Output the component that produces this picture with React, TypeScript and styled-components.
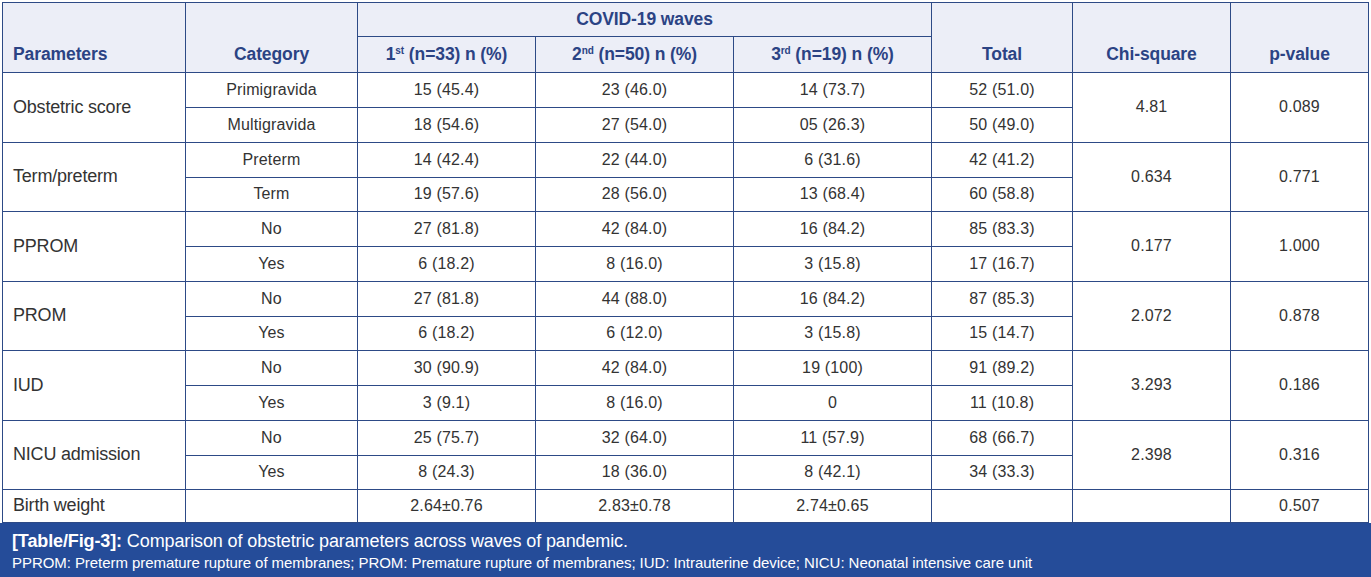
import React from "react";
import styled, { createGlobalStyle } from "styled-components";

const Global = createGlobalStyle`
  html, body { margin: 0; padding: 0; background: #ffffff; }
  body { font-family: "Liberation Sans", Arial, sans-serif; }
`;

const Page = styled.div`
  width: 1371px;
  height: 577px;
  display: flex;
  flex-direction: column;
  background: #ffffff;
  overflow: hidden;
`;

const TableWrap = styled.div`
  padding: 2px 3px 0 2px;
`;

const Table = styled.table`
  border-collapse: collapse;
  table-layout: fixed;
  width: 1366px;
  font-family: "Liberation Sans", Arial, sans-serif;
  font-size: 16px;
  color: #333333;
`;

const border = "1px solid #2d4a86";

const Th = styled.th<{ $align?: string; $valign?: string }>`
  background: #eceef7;
  color: #2b4384;
  font-weight: bold;
  font-size: 17.5px;
  letter-spacing: -0.1px;
  border: ${border};
  text-align: ${(p) => p.$align || "center"};
  vertical-align: ${(p) => p.$valign || "middle"};
  padding: ${(p) => (p.$align === "left" ? "0 0 7px 10px" : p.$valign === "bottom" ? "0 0 7px 0" : "0")};
  white-space: nowrap;
`;

const HeadRow = styled.tr<{ $h: number }>`
  height: ${(p) => p.$h}px;
`;

const Row = styled.tr<{ $h: number }>`
  height: ${(p) => p.$h}px;
`;

const Td = styled.td<{ $left?: boolean }>`
  border: ${border};
  text-align: ${(p) => (p.$left ? "left" : "center")};
  padding: ${(p) => (p.$left ? "0 0 0 10px" : "0")};
  font-size: ${(p) => (p.$left ? "18px" : "16px")};
  letter-spacing: ${(p) => (p.$left ? "-0.2px" : "0.15px")};
  vertical-align: middle;
  white-space: nowrap;
`;

const Sup = styled.sup`
  font-size: 10px;
  vertical-align: 6px;
  line-height: 0;
`;

const Caption = styled.div`
  flex: 1;
  background: #254c99;
  color: #ffffff;
  padding: 8px 0 0 12px;
  display: flex;
  flex-direction: column;
  gap: 2px;
`;

const CaptionTitle = styled.div`
  font-size: 18px;
  line-height: 21px;
  font-family: "Liberation Sans", Arial, sans-serif;
  letter-spacing: -0.12px;
`;

const CaptionNote = styled.div`
  font-size: 15px;
  line-height: 18px;
  font-family: "Liberation Sans", Arial, sans-serif;
  letter-spacing: -0.06px;
`;

type Group = {
  name: string;
  chi: string;
  p: string;
  rows: [string, string, string, string, string][];
};

const groups: Group[] = [
  {
    name: "Obstetric score",
    chi: "4.81",
    p: "0.089",
    rows: [
      ["Primigravida", "15 (45.4)", "23 (46.0)", "14 (73.7)", "52 (51.0)"],
      ["Multigravida", "18 (54.6)", "27 (54.0)", "05 (26.3)", "50 (49.0)"],
    ],
  },
  {
    name: "Term/preterm",
    chi: "0.634",
    p: "0.771",
    rows: [
      ["Preterm", "14 (42.4)", "22 (44.0)", "6 (31.6)", "42 (41.2)"],
      ["Term", "19 (57.6)", "28 (56.0)", "13 (68.4)", "60 (58.8)"],
    ],
  },
  {
    name: "PPROM",
    chi: "0.177",
    p: "1.000",
    rows: [
      ["No", "27 (81.8)", "42 (84.0)", "16 (84.2)", "85 (83.3)"],
      ["Yes", "6 (18.2)", "8 (16.0)", "3 (15.8)", "17 (16.7)"],
    ],
  },
  {
    name: "PROM",
    chi: "2.072",
    p: "0.878",
    rows: [
      ["No", "27 (81.8)", "44 (88.0)", "16 (84.2)", "87 (85.3)"],
      ["Yes", "6 (18.2)", "6 (12.0)", "3 (15.8)", "15 (14.7)"],
    ],
  },
  {
    name: "IUD",
    chi: "3.293",
    p: "0.186",
    rows: [
      ["No", "30 (90.9)", "42 (84.0)", "19 (100)", "91 (89.2)"],
      ["Yes", "3 (9.1)", "8 (16.0)", "0", "11 (10.8)"],
    ],
  },
  {
    name: "NICU admission",
    chi: "2.398",
    p: "0.316",
    rows: [
      ["No", "25 (75.7)", "32 (64.0)", "11 (57.9)", "68 (66.7)"],
      ["Yes", "8 (24.3)", "18 (36.0)", "8 (42.1)", "34 (33.3)"],
    ],
  },
];

const widths = [183, 172, 178, 198, 198, 141, 158, 138];

export default function App() {
  return (
    <Page>
      <Global />
      <TableWrap>
        <Table>
          <colgroup>
            {widths.map((w, i) => (
              <col key={i} style={{ width: w }} />
            ))}
          </colgroup>
          <thead>
            <HeadRow $h={34}>
              <Th rowSpan={2} $align="left" $valign="bottom">
                Parameters
              </Th>
              <Th rowSpan={2} $valign="bottom">
                Category
              </Th>
              <Th colSpan={3}>COVID-19 waves</Th>
              <Th rowSpan={2} $valign="bottom">
                Total
              </Th>
              <Th rowSpan={2} $valign="bottom">
                Chi-square
              </Th>
              <Th rowSpan={2} $valign="bottom">
                p-value
              </Th>
            </HeadRow>
            <HeadRow $h={36}>
              <Th>
                1<Sup>st</Sup> (n=33) n (%)
              </Th>
              <Th>
                2<Sup>nd</Sup> (n=50) n (%)
              </Th>
              <Th>
                3<Sup>rd</Sup> (n=19) n (%)
              </Th>
            </HeadRow>
          </thead>
          <tbody>
            {groups.map((g) =>
              g.rows.map((r, i) => (
                <Row key={g.name + i} $h={i === 0 ? 35 : 34.5}>
                  {i === 0 && (
                    <Td rowSpan={2} $left>
                      {g.name}
                    </Td>
                  )}
                  {r.map((c, j) => (
                    <Td key={j}>{c}</Td>
                  ))}
                  {i === 0 && <Td rowSpan={2}>{g.chi}</Td>}
                  {i === 0 && <Td rowSpan={2}>{g.p}</Td>}
                </Row>
              ))
            )}
            <Row $h={32.5}>
              <Td $left>Birth weight</Td>
              <Td></Td>
              <Td>2.64±0.76</Td>
              <Td>2.83±0.78</Td>
              <Td>2.74±0.65</Td>
              <Td></Td>
              <Td></Td>
              <Td>0.507</Td>
            </Row>
          </tbody>
        </Table>
      </TableWrap>
      <Caption>
        <CaptionTitle>
          <b>[Table/Fig-3]:</b> Comparison of obstetric parameters across waves of pandemic.
        </CaptionTitle>
        <CaptionNote>
          PPROM: Preterm premature rupture of membranes; PROM: Premature rupture of membranes; IUD: Intrauterine device; NICU: Neonatal intensive care unit
        </CaptionNote>
      </Caption>
    </Page>
  );
}
